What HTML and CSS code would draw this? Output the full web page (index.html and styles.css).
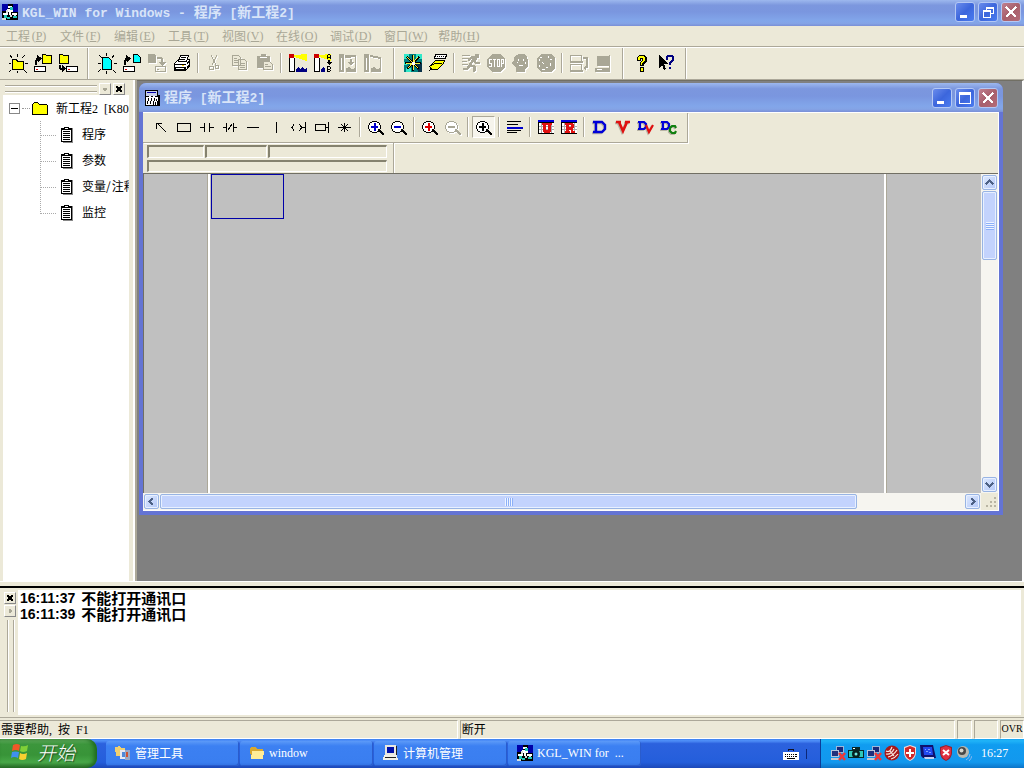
FILE: index.html
```html
<!DOCTYPE html>
<html lang="zh-CN">
<head>
<meta charset="utf-8">
<title>KGL_WIN for Windows</title>
<link rel="stylesheet" href="styles.css">
</head>
<body>
<svg class="defs" aria-hidden="true">
  <symbol id="clip" viewBox="0 0 14 17"><path d="M3 2h10v15H3z" fill="#888"/><path d="M1 2h11v14H1z" fill="#000"/><path d="M2 4h9v11H2z" fill="#fff"/><path d="M4 1h5v3H4zM3 5h7v1H3zM3 7h7v1H3zM3 9h7v1H3zM3 11h7v1H3zM3 13h7v1H3z" fill="#000"/><path d="M5 2h3v1H5z" fill="#fff"/></symbol>
  <symbol id="kgl" viewBox="0 0 16 16"><path d="M0 0h16v16H0z" fill="#000"/><path d="M0 0h6v7H0zM11 0h5v8h-5z" fill="#0000a8"/><path d="M6 2h4v2H6zM5 5h6v3H5zM1 9h5v2H1zM10 9h5v2h-5zM7 8h2v3H7z" fill="#fff"/><path d="M8 3h3v3H8zM2 11h3v3H2zM5 13h3v2H5zM11 12h4v2h-4z" fill="#20c8b8"/><path d="M4 6h2v3H4zM12 11h2v1h-2zM0 14h4v2H0zM8 11h2v2H8z" fill="#d8e0e0"/></symbol>
  <symbol id="min" viewBox="0 0 20 20"><path d="M5 13h7v3H5z" fill="#fff"/></symbol>
  <symbol id="close" viewBox="0 0 20 20"><path d="M5 5l10 10M15 5L5 15" stroke="#fff" stroke-width="2.4" fill="none"/></symbol>
  <symbol id="drive" viewBox="0 0 12 6"><path d="M.5.5h11v5H.5z" fill="#fff" stroke="#000"/><path d="M2 3h2v1H2z" fill="#e00000"/></symbol>
  <symbol id="net" viewBox="0 0 16 16"><path d="M6 1h8v7H6z" fill="#9db6d8"/><path d="M7 2h6v5H7z" fill="#182878"/><path d="M1 5h8v7H1z" fill="#b4c4dc"/><path d="M2 6h6v5H2z" fill="#20307c"/><path d="M1 13h9v2H1z" fill="#c8c8d0"/><path d="M9 8l6 7M15 8L9 15" stroke="#f03838" stroke-width="2.5"/></symbol>
  <symbol id="mag" viewBox="0 0 23 24"><path d="M8 7h5v1h2v2h1v5h-2v1h-1v1H8v-1H6v-2H5v-4h1V8h2z" fill="#fff"/><path d="M8 6h5v1H8zM6 7h2v1H6zM13 7h2v1h-2zM5 8h1v2H5zM15 8h1v2h-1zM4 10h1v4H4zM16 10h1v4h-1zM5 14h1v2H5zM6 16h2v1H6zM8 17h5v1H8zM14 14h2v2h-2zM13 16h2v1h-2zM15 15h2v2h-2zM16 16h2v2h-2zM17 17h2v2h-2zM18 18h2v2h-2z" fill="currentColor"/></symbol>
</svg>

<header class="titlebar">
  <svg class="i16"><use href="#kgl"/></svg>
  <h1><span class="lat">KGL_WIN for Windows - </span>程序<span class="lat"> [</span>新工程<span class="lat">2]</span></h1>
  <div class="winbtns">
    <button aria-label="最小化"><svg viewBox="0 0 20 20"><use href="#min"/></svg></button>
    <button aria-label="还原"><svg viewBox="0 0 20 20"><path d="M8 5h8v2H8zM15 5h1v7h-1zM8 5h1v3H8zM13 11h3v1h-3zM5 8h8v2H5zM5 8h1v8H5zM12 8h1v8h-1zM5 15h8v1H5z" fill="#fff"/></svg></button>
    <button class="x" aria-label="关闭"><svg viewBox="0 0 20 20"><use href="#close"/></svg></button>
  </div>
</header>

<nav class="menu">
  <button>工程<span class="lat">(<u>P</u>)</span></button>
  <button>文件<span class="lat">(<u>F</u>)</span></button>
  <button>编辑<span class="lat">(<u>E</u>)</span></button>
  <button>工具<span class="lat">(<u>T</u>)</span></button>
  <button>视图<span class="lat">(<u>V</u>)</span></button>
  <button>在线<span class="lat">(<u>O</u>)</span></button>
  <button>调试<span class="lat">(<u>D</u>)</span></button>
  <button>窗口<span class="lat">(<u>W</u>)</span></button>
  <button>帮助<span class="lat">(<u>H</u>)</span></button>
</nav>

<div class="toolbar">
  <div class="band">
    <button aria-label="新工程"><svg viewBox="0 0 25 24"><path d="M7.500 8.500h4l1 2h6v8h-11z" fill="#ff0" stroke="#000"/><path d="M12 3h1v3h-1zM12 20h1v2h-1zM4 12h2v1H4zM20 12h3v1h-3z"/><path d="M5 4l2 3M20 4l-3 3M4 21l2-2M19 19l3 3" stroke="#000" fill="none"/></svg></button>
    <button aria-label="打开工程"><svg viewBox="0 0 25 24"><path d="M12.500 3.500h3l1 1h5v8h-9z" fill="#ff0" stroke="#000"/><path d="M5 9h2v5H5zM6 7h2v3H6z"/><path d="M7 4l5 3-4 4z"/><use href="#drive" x="4" y="15" width="12" height="6"/></svg></button>
    <button aria-label="保存工程"><svg viewBox="0 0 25 24"><path d="M4.500 3.500h3l1 1h5v8h-9z" fill="#ff0" stroke="#000"/><path d="M4 14h2v4H4zM5 17h3v2H5z"/><path d="M7 14l4 4-4 3z"/><use href="#drive" x="11" y="15" width="12" height="6"/></svg></button>
  </div>
  <div class="band two">
    <button aria-label="新文件"><svg viewBox="0 0 25 24"><path d="M8.500 6.500h6l3 3v9h-9z" fill="#0ff" stroke="#000"/><path d="M12 2h1v3h-1zM12 20h1v3h-1zM4 12h3v1H4zM20 12h3v1h-3z"/><path d="M5 4l3 3M20 4l-2 3M4 21l3-3M19 19l3 3" stroke="#000" fill="none"/></svg></button>
    <button aria-label="打开文件"><svg viewBox="0 0 25 24"><path d="M14.500 3.500h4l3 3v5h-7z" fill="#0ff" stroke="#000"/><path d="M5 9h2v5H5zM6 7h2v3H6z"/><path d="M7 4l5 3-4 4z"/><use href="#drive" x="4" y="15" width="12" height="6"/></svg></button>
    <button class="dis" disabled aria-label="保存文件"><svg viewBox="0 0 25 24"><path d="M4 3h6l2 2v7H4zM13 6h4l2 2v3h3l-4 4-4-4h3V8h-4z"/><path d="M11.500 15.500h10v5h-10z" fill="none" stroke="#a9a796"/><path d="M13 18h2v1h-2z"/></svg></button>
    <button aria-label="打印"><svg viewBox="0 0 25 24"><path d="M5.500 12.500l4-4h11v7l-4 4h-11z" fill="#fff" stroke="#000"/><path d="M9.500 10.500l2-6h8l-2 6z" fill="#fff" stroke="#000"/><path d="M12 6h5v1h-5zM11 8h5v1h-5zM5 13h12v1H5zM6 16h11v3H6zM18 11l3-2v1l-3 3zM18 15l3-3v2l-3 3z"/><path d="M7 17h8v1H7z" fill="#fff"/><path d="M13 14h2v1h-2z" fill="#fc0"/></svg></button>
    <i class="sep"></i>
    <button class="dis" disabled aria-label="剪切"><svg viewBox="0 0 25 24"><path d="M9 4l5 10M15 4l-5 10" stroke="#a9a796" fill="none"/><circle cx="9.500" cy="17" r="2" fill="none" stroke="#a9a796"/><circle cx="15" cy="16" r="2" fill="none" stroke="#a9a796"/></svg></button>
    <button class="dis" disabled aria-label="复制"><svg viewBox="0 0 25 24"><path d="M5.500 4.500h6l2 2v8h-8zM11.500 8.500h6l2 2v8h-8z" fill="#ece9d8" stroke="#a9a796"/><path d="M7 7h3v1H7zM7 9h4v1H7zM7 11h4v1H7zM13 12h5v1h-5zM13 14h5v1h-5zM13 16h5v1h-5z"/></svg></button>
    <button class="dis" disabled aria-label="粘贴"><svg viewBox="0 0 25 24"><path d="M5 5h4V3h5v2h4v12H5z"/><path d="M8 6h7v1H8z" fill="#fff"/><path d="M11.500 10.500h6l3 3v5h-9z" fill="#ece9d8" stroke="#a9a796"/><path d="M13 13h3v1h-3zM13 15h6v1h-6z"/></svg></button>
    <i class="sep"></i>
    <button aria-label="监视"><svg viewBox="0 0 25 24"><path d="M9 4l13-1v7L9 6z" fill="#ff0"/><path d="M5 7h4v13H5z" fill="#fff"/><path d="M4 6h1v15H4zM9 7h1v14H9zM4 20h6v1H4z"/><path d="M4 3h5v4H4z" fill="#c00"/><path d="M11 18l2-2 2 2 2-2 2 2 3-1v4H11z" fill="#000080"/></svg></button>
    <button aria-label="监视 A-B"><svg viewBox="0 0 25 24"><path d="M9 4l12-1v7L9 6z" fill="#ff0"/><path d="M5 7h4v13H5z" fill="#fff"/><path d="M4 6h1v15H4zM9 7h1v14H9zM4 20h6v1H4zM18 9h2v3h-2zM16 11h6l-3 3z"/><path d="M4 3h5v4H4z" fill="#c00"/><path d="M11 18l2-2 2 2v3h-4z" fill="#000080"/><path d="M18 3h2v1h-2zM17 4h1v4h-1zM20 4h1v4h-1zM18 6h2v1h-2zM17 15h3v1h-3zM17 16h1v5h-1zM20 16h1v2h-1zM18 18h2v1h-2zM20 19h1v1h-1zM18 20h2v1h-2z"/></svg></button>
    <button class="dis" disabled aria-label="监视下移"><svg viewBox="0 0 25 24"><path d="M4 3h5v18H4zM10 4h11v2l-11 1zM20 4h1v17h-1zM11 17l3-1 2 2 5-1v4H11zM15 8h2v3h2l-3 4-3-4h2z"/><path d="M6 7h1v12H6z" fill="#fff"/></svg></button>
    <button class="dis" disabled aria-label="监视停止"><svg viewBox="0 0 25 24"><path d="M4 3h5v18H4zM10 4l11 2v15h-1V8l-10-2zM11 17l3-1 2 2 5-1v4H11z"/><path d="M6 7h1v12H6z" fill="#fff"/></svg></button>
  </div>
  <div class="band three">
    <button aria-label="连接"><svg viewBox="0 0 25 24"><path d="M4 3h18v18H4z" fill="#008080"/><path d="M4 3h5v5H4zM16 3h6v5h-6zM6 17h5v4H6zM4 11h3v3H4z" fill="#30e8c8"/><path d="M16 12h6v9h-4z" fill="#083048"/><path d="M13 4v16M5 12h16M7 6l12 12M19 6L7 18" stroke="#000" stroke-width="2.500"/><path d="M13 4v15M6 12h14M7 6l11 11M18 6L8 17" stroke="#f8f040"/><path d="M12 11h3v3h-3z" fill="#fff"/></svg></button>
    <button aria-label="编程电缆"><svg viewBox="0 0 25 24"><path d="M10.500 3.500h11l-1 4h-11z" fill="#fff" stroke="#000"/><path d="M12 5h1v1h-1zM14 5h1v1h-1zM16 5h1v1h-1zM18 5h1v1h-1z"/><path d="M10.500 9.500h9l-1 3-6 6h-6l-2-3z" fill="#ff0" stroke="#000"/><path d="M5 15l6-3h6M4 20l3-3" stroke="#000" fill="none"/></svg></button>
    <i class="sep"></i>
    <button class="dis" disabled aria-label="运行"><svg viewBox="0 0 25 24"><path d="M4 4h8v1H4zM4 7h6v1H4zM4 10h5v1H4zM4 13h6v1H4zM17 3h4v4h-4z"/><path d="M19 8l-4-2-5 3M16 8l-4 6 5 2-1 5M12 14l-3 4H5M16 9l2 3h4" fill="none" stroke="#a9a796" stroke-width="2.500"/></svg></button>
    <button class="dis" disabled aria-label="停止"><svg viewBox="0 0 25 24"><path d="M9 3h8l5 5v8l-5 5H9l-5-5V8z"/><path d="M6 8h3v1H6zM6 9h1v3H6zM6 12h3v1H6zM8 13h1v3H8zM6 15h3v1H6zM10 8h3v1h-3zM11 8h1v8h-1zM14 8h3v1h-3zM14 15h3v1h-3zM14 8h1v8h-1zM16 8h1v8h-1zM18 8h1v8h-1zM18 8h3v1h-3zM20 8h1v4h-1zM18 12h3v1h-3z" fill="#fff"/></svg></button>
    <button class="dis" disabled aria-label="暂停"><svg viewBox="0 0 25 24"><path d="M8 4l3-1h5l3 2 1 5v6l-3 2v3H8v-4l-3-3-1-3 2-1V7z"/><path d="M10 8h1v2h-1zM15 8h1v2h-1zM11 14h4v1h-4zM9 11h1v1H9zM17 11h1v2h-1z" fill="#fff"/></svg></button>
    <button class="dis" disabled aria-label="调试"><svg viewBox="0 0 25 24"><path d="M8 3h10l4 4v10l-4 4H8l-4-4V7z"/><path d="M6 8h1v2H6zM7 6h2v1H7zM15 5h1v2h-1zM17 8h2v1h-2zM9 11h1v1H9zM10 12h1v1h-1zM17 12h1v3h-1zM9 18h3v1H9zM13 16h2v1h-2zM6 14h1v2H6z" fill="#fff"/></svg></button>
    <i class="sep"></i>
    <button class="dis" disabled aria-label="传送"><svg viewBox="0 0 25 24"><path d="M4.500 4.500h11v6h-11zM4.500 13.500h11v6h-11z" fill="none" stroke="#a9a796"/><path d="M4 10h13v2H4zM4 19h13v2H4zM17 6h5v11h-2v3l-3-3 3-3V8h-3z"/></svg></button>
    <button class="dis" disabled aria-label="计算机"><svg viewBox="0 0 25 24"><path d="M6 5h12v10H6zM4 17h15v4H4zM18 4h1v13h-1z"/><path d="M6 18h5v1H6z" fill="#fff"/></svg></button>
  </div>
  <div class="band four">
    <button aria-label="帮助"><svg viewBox="0 0 25 24"><path d="M10 4h6v1h1v1h1v5h-1v1h-1v1h-1v2h-4v-4h1v-1h1V8h-1v2H8V6h1V5h1zM11 16h4v5h-4z"/><path d="M10 5h5v1h1v4h-1v1h-1v1h-1v2h-1v-3h1v-1h1V7h-3v2H9V6h1zM12 17h2v3h-2z" fill="#ff0"/></svg></button>
    <button aria-label="上下文帮助"><svg viewBox="0 0 25 24"><path d="M5 4v13l3-3 2 5 2-1-2-5h4z"/><path d="M13 4h6v1h1v5h-1v1h-1v1h-1v2h-2v-3h1v-1h1V9h1V6h-4v3h-2V5h1zM15 16h2v2h-2z" fill="#000080"/></svg></button>
  </div>
</div>

<main class="work">
  <aside class="side">
    <div class="dockhead"><i class="grip"></i>
      <button aria-label="折叠"><svg viewBox="0 0 11 11"><path d="M2 4h7L5.500 8z" fill="#a9a796"/></svg></button>
      <button aria-label="关闭面板"><svg viewBox="0 0 11 11"><path d="M2.500 2.500l6 6M8.500 2.500l-6 6" stroke="#000" stroke-width="2"/></svg></button>
    </div>
    <div class="tree">
      <div class="root"><button aria-label="收起"><svg viewBox="0 0 9 9"><path d="M1 4h7v1H1z"/></svg></button><i></i><svg class="folder" viewBox="0 0 17 14"><path d="M1 3l1-2h4l1 2h8v10H1z" fill="#ff0"/><path d="M1 12h15v1H1zM15 3h1v10h-1zM7 2h8v1H7zM2 0h4v1H2zM1 1h1v1H1zM6 1h1v1H6zM0 2h1v11H0z" fill="#000"/></svg><span>新工程<span class="lat">2  [K80S</span></span></div>
      <ul>
        <li><svg><use href="#clip"/></svg>程序</li>
        <li><svg><use href="#clip"/></svg>参数</li>
        <li><svg><use href="#clip"/></svg><span>变量<span class="slash">/</span>注释</span></li>
        <li><svg><use href="#clip"/></svg>监控</li>
      </ul>
    </div>
  </aside>
  <section class="mdi">
    <article class="child">
      <header class="ctitle">
        <svg class="i16" viewBox="0 0 16 16"><path d="M1 0h13v5h2v11H1z" fill="#000"/><path d="M2 1h11v5H2z" fill="#c8d0e8"/><path d="M3 2h9v1H3z" fill="#00a"/><path d="M2 7h3V6h2v1h2V6h2v1h3v4h-1v4H2z" fill="#fff"/><path d="M4 8h1v3H4zM3 11h1v3H3zM7 8h1v3H7zM6 11h1v3H6zM10 8h1v3h-1zM9 11h1v4H9zM12 9h1v2h-1zM11 12h1v3h-1z" fill="#000"/></svg>
        <h2>程序<span class="lat"> [</span>新工程<span class="lat">2]</span></h2>
        <div class="winbtns">
          <button aria-label="最小化"><svg viewBox="0 0 20 20"><use href="#min"/></svg></button>
          <button aria-label="最大化"><svg viewBox="0 0 20 20"><path d="M4 4h12v12H4zM5 7v8h10V7z" fill="#fff" fill-rule="evenodd"/></svg></button>
          <button class="x" aria-label="关闭"><svg viewBox="0 0 20 20"><use href="#close"/></svg></button>
        </div>
      </header>
      <div class="cbody">
        <div class="ctools">
          <button aria-label="选择"><svg viewBox="0 0 23 24"><path d="M7 8h6v1H7zM7 8h1v6H7z"/><path d="M8 8l9 9" stroke="#000"/></svg></button>
          <button aria-label="块"><svg viewBox="0 0 23 24"><path d="M5.500 8.500h13v8h-13z" fill="none" stroke="#000"/></svg></button>
          <button aria-label="常开触点"><svg viewBox="0 0 23 24"><path d="M5 12h4v1H5zM9 8h1v9H9zM14 8h1v9h-1zM15 12h4v1h-4z"/></svg></button>
          <button aria-label="常闭触点"><svg viewBox="0 0 23 24"><path d="M5 12h4v1H5zM8 8h1v9H8zM15 8h1v9h-1zM15 12h4v1h-4z"/><path d="M10 15l4-6" stroke="#000"/></svg></button>
          <button aria-label="横线"><svg viewBox="0 0 23 24"><path d="M6 12h12v1H6z"/></svg></button>
          <button aria-label="竖线"><svg viewBox="0 0 23 24"><path d="M12 7h1v11h-1z"/></svg></button>
          <button aria-label="线圈"><svg viewBox="0 0 23 24"><path d="M7 9l-2 3.500L7 16M12 9l3 3.500-3 3.500M15 12.500h3" fill="none" stroke="#000"/><path d="M18 7h1v11h-1z"/></svg></button>
          <button aria-label="功能块"><svg viewBox="0 0 23 24"><path d="M5.500 9.500h10v6h-10z" fill="none" stroke="#000"/><path d="M16 12h2v1h-2zM18 7h1v11h-1z"/></svg></button>
          <button aria-label="取反"><svg viewBox="0 0 23 24"><path d="M5 12h13v1H5zM11 8h1v9h-1z"/><path d="M8 9l7 7M15 9l-7 7" stroke="#000"/></svg></button>
          <i class="sep"></i>
          <button aria-label="放大"><svg viewBox="0 0 23 24"><use href="#mag"/><path d="M7 11h7v2H7zM10 8h2v8h-2z" fill="#00c"/></svg></button>
          <button aria-label="缩小"><svg viewBox="0 0 23 24"><use href="#mag"/><path d="M7 11h7v2H7z" fill="#00c"/></svg></button>
          <i class="sep"></i>
          <button aria-label="横向放大"><svg viewBox="0 0 23 24"><use href="#mag"/><path d="M7 11h7v2H7zM10 8h2v8h-2z" fill="#d00"/></svg></button>
          <button class="dis" disabled aria-label="横向缩小"><svg viewBox="0 0 23 24"><use href="#mag"/><path d="M7 11h7v2H7z"/></svg></button>
          <i class="sep"></i>
          <button class="pressed" aria-label="适合窗口"><svg viewBox="0 0 23 24"><use href="#mag"/><path d="M7 11h7v2H7zM10 8h2v8h-2z"/></svg></button>
          <i class="sep"></i>
          <button aria-label="注释"><svg viewBox="0 0 23 24"><path d="M4 6h14v1H4zM4 9h11v1H4zM4 15h14v1H4zM4 17h10v1H4z"/><path d="M4 12h16v2H4z" fill="#00c"/></svg></button>
          <i class="sep"></i>
          <button aria-label="使用表"><svg viewBox="0 0 23 24"><path d="M4 5h16v14H4z"/><path d="M5 8h15v10H5z" fill="#fff"/><path d="M4 5h16v2H4z" fill="#00d"/><path d="M5 11h15v1H5zM5 14h15v1H5zM7 8h1v10H7zM17 8h1v10h-1z" fill="#aaa"/><path d="M8 8h4v1h-1v6h3V9h-1V8h4v1h-1v7h-1v1h-5v-1H9V9H8z" fill="#e01010" stroke="#e01010" stroke-width="1"/></svg></button>
          <button aria-label="寄存器表"><svg viewBox="0 0 23 24"><path d="M4 5h16v14H4z"/><path d="M5 8h15v10H5z" fill="#fff"/><path d="M4 5h16v2H4z" fill="#00d"/><path d="M5 11h15v1H5zM5 14h15v1H5zM7 8h1v10H7zM17 8h1v10h-1z" fill="#aaa"/><path d="M8 8h7v1h1v3h-1v1h-1v1h1v2h2v1h-3v-3h-3v2h1v1H8v-1h1V9H8zM11 9v3h3V9z" fill="#e01010" stroke="#e01010" stroke-width="1" fill-rule="evenodd"/></svg></button>
          <i class="sep"></i>
          <button class="letter b" aria-label="设备"><svg viewBox="0 0 23 24"><path d="M5 7h9l3 3v4l-3 3H5M8 7v10" fill="none" stroke="currentColor" stroke-width="2.400"/></svg></button>
          <button class="letter r" aria-label="变量"><svg viewBox="0 0 23 24"><path d="M5 7h5M14 7h5M8 7l4 9 4-9" fill="none" stroke="currentColor" stroke-width="2.600"/></svg></button>
          <button class="letter b" aria-label="设备与变量"><svg viewBox="0 0 23 24"><path d="M4 7h6l2 2v3l-2 2H4M6 7v7" fill="none" stroke="currentColor" stroke-width="2.200"/><path d="M12 10l3 7 4-7" fill="none" stroke="#e01010" stroke-width="2.200"/></svg></button>
          <button class="letter b" aria-label="设备与注释"><svg viewBox="0 0 23 24"><path d="M4 7h6l2 2v3l-2 2H4M6 7v7" fill="none" stroke="currentColor" stroke-width="2.200"/><path d="M19 13l-1-2h-3l-2 2v3l2 2h3l1-2" fill="none" stroke="#108010" stroke-width="2.200"/></svg></button>
        </div>
        <div class="info"><div class="cells"><span></span><span></span><span></span><span></span></div></div>
        <div class="view">
          <div class="canvas"><div class="rail"></div><div class="sheet"><div class="cursor"></div></div><div class="margin"></div></div>
          <div class="vbar">
            <button aria-label="向上滚动"><svg viewBox="0 0 15 15"><path d="M3.500 9.500l4-4 4 4" fill="none" stroke="#4d6185" stroke-width="2.400"/></svg></button>
            <div class="thumb"></div><div class="room"></div>
            <button aria-label="向下滚动"><svg viewBox="0 0 15 15"><path d="M3.500 5.500l4 4 4-4" fill="none" stroke="#4d6185" stroke-width="2.400"/></svg></button>
          </div>
          <div class="hbar">
            <button aria-label="向左滚动"><svg viewBox="0 0 15 15"><path d="M9 3.500l-4 4 4 4" fill="none" stroke="#4d6185" stroke-width="2.400"/></svg></button>
            <div class="thumb"></div><div class="room"></div>
            <button aria-label="向右滚动"><svg viewBox="0 0 15 15"><path d="M6 3.500l4 4-4 4" fill="none" stroke="#4d6185" stroke-width="2.400"/></svg></button>
          </div>
          <svg class="corner" viewBox="0 0 17 17"><path d="M13 4h2v2h-2zM9 8h2v2H9zM13 8h2v2h-2zM5 12h2v2H5zM9 12h2v2H9zM13 12h2v2h-2z" fill="#b8b4a2"/></svg>
        </div>
      </div>
    </article>
  </section>
</main>

<section class="output">
  <div class="odock">
    <button aria-label="关闭输出"><svg viewBox="0 0 11 11"><path d="M2.500 2.500l6 6M8.500 2.500l-6 6" stroke="#000" stroke-width="2"/></svg></button>
    <button aria-label="展开输出"><svg viewBox="0 0 11 11"><path d="M4 2l4 3.500L4 9z" fill="#a9a796"/></svg></button>
    <i></i>
  </div>
  <div class="log">
    <p><time>16:11:37</time><span>不能打开通讯口</span></p>
    <p><time>16:11:39</time><span>不能打开通讯口</span></p>
  </div>
</section>

<footer class="status">
  <span class="s1">需要帮助<span class="lat">,  </span>按<span class="lat">  F1</span></span>
  <span class="s2">断开</span><span class="s3"></span><span class="s4"></span><span class="s5">OVR</span>
</footer>

<nav class="taskbar">
  <button class="start"><svg viewBox="0 0 20 20"><path d="M3 3q4-2 7 0L9 9Q6 7 2 9z" fill="#f05828"/><path d="M11 4q4 1 7-1l-1 6q-4 2-7 0z" fill="#80d038"/><path d="M2 10q3-1 7 0l-1 6q-4-2-7 0z" fill="#4090f0"/><path d="M10 11q3 2 7 0l-1 6q-4 2-7 0z" fill="#f8d030"/></svg><span>开始</span></button>
  <div class="tasks">
    <button><svg viewBox="0 0 16 16"><path d="M0 2l5-1 1 2h4v8H1z" fill="#f0d070"/><path d="M5 5h5v9H5z" fill="#e8e8f0"/><path d="M10 5h5v10h-5z" fill="#98a8c8"/><path d="M7 7h3v5H7z" fill="#5088d8"/><path d="M11 7h2v5h-2z" fill="#d05030"/></svg>管理工具</button>
    <button><svg viewBox="0 0 16 16"><path d="M1 3l1-1h4l2 2h6v10H2z" fill="#d8a830"/><path d="M3 6h12l-1 8H2z" fill="#ffec98"/></svg><span class="lat">window</span></button>
    <button><svg viewBox="0 0 16 16"><path d="M2 0h11v10H2z" fill="#e8e8e0"/><path d="M4 2h7v6H4z" fill="#0010a8"/><path d="M1 10h13l1 5H0z" fill="#f0f0e8"/><path d="M2 12h11v1H2zM13 1h1v9h-1z" fill="#222"/></svg>计算机管理</button>
    <button><svg><use href="#kgl"/></svg><span class="lat">KGL_WIN for  ...</span></button>
  </div>
  <div class="lang"><svg viewBox="0 0 16 12"><path d="M0 4h16v8H0z" fill="#fff"/><path d="M2 6h1v1H2zM4 6h1v1H4zM6 6h1v1H6zM8 6h1v1H8zM10 6h1v1h-1zM12 6h2v1h-2zM2 8h1v1H2zM4 8h1v1H4zM6 8h1v1H6zM8 8h1v1H8zM10 8h1v1h-1zM12 8h2v1h-2zM4 10h8v1H4z" fill="#000"/><path d="M5 3V1h5v2" fill="none" stroke="#112"/></svg><i></i></div>
  <div class="tray">
    <svg><use href="#net"/></svg>
    <svg viewBox="0 0 16 16"><path d="M0 5h4V2h8v3h4v8H0z" fill="#082828"/><path d="M1 6h14v6H1z" fill="#30c8b8"/><circle cx="8" cy="9" r="4" fill="#062020"/><circle cx="8" cy="9" r="1.500" fill="#70e8e0"/><path d="M5 3h2v1H5z" fill="#fff"/></svg>
    <svg><use href="#net"/></svg>
    <svg viewBox="0 0 16 16"><circle cx="8" cy="8" r="7.500" fill="#a81818"/><path d="M2 6q4 2 6-4M4 12q5-1 9-7M2 9q5 1 8-5M7 14q4-1 7-5M6 6l4 5" fill="none" stroke="#f8e8e0" stroke-width="1.200"/></svg>
    <svg viewBox="0 0 16 16"><path d="M8 0l6 2v6q0 5-6 8-6-3-6-8V2z" fill="#f0d8d8"/><path d="M8 1l5 2v5q0 4-5 7-5-3-5-7V3z" fill="#d02828"/><path d="M7 4h2v3h3v2H9v3H7V9H4V7h3z" fill="#fff"/></svg>
    <svg viewBox="0 0 16 16"><path d="M0 0h13l3 13H3L1 11z" fill="#10106c"/><path d="M3 2h9l1 8H4z" fill="#2048f0"/><path d="M5 4h1v1H5zM8 4h2v1H8zM6 6h2v1H6zM9 7h2v1H9z" fill="#80a0ff"/><path d="M4 12h10v2H5z" fill="#c8d0f0"/></svg>
    <svg viewBox="0 0 16 16"><path d="M8 0l6 2v6q0 5-6 8-6-3-6-8V2z" fill="#982030"/><path d="M8 1l5 2v5q0 4-5 7-5-3-5-7V3z" fill="#e03040"/><path d="M5 5l6 5M11 5l-6 5" stroke="#fff" stroke-width="2"/></svg>
    <svg viewBox="0 0 16 16"><circle cx="7" cy="7" r="6" fill="#b8b8b0"/><circle cx="6" cy="6" r="4" fill="#484848"/><circle cx="5.500" cy="5.500" r="2" fill="#d8d8d0"/><path d="M10 15q4-2 4-6M13 16q2-2 3-5" fill="none" stroke="#88b8f0"/></svg>
    <time class="lat">16:27</time>
  </div>
</nav>
</body>
</html>
```
FILE: styles.css
```css
* { box-sizing: border-box; }
html, body { height: 100%; margin: 0; }
body {
  display: flex;
  flex-direction: column;
  overflow: hidden;
  background: #ece9d8;
  color: #000;
  font: 12px/16px "Noto Sans CJK SC", sans-serif;
}
button {
  display: flex;
  align-items: center;
  justify-content: center;
  margin: 0;
  padding: 0;
  border: 0;
  background: none;
  color: inherit;
  font: inherit;
}
h1, h2, p, ul { margin: 0; padding: 0; font: inherit; }
ul { list-style: none; }
svg { display: block; flex: none; shape-rendering: crispEdges; }
.defs { position: absolute; width: 0; height: 0; }
.lat { font-family: "Liberation Serif", serif; font-size: 12px; white-space: pre; }
.i16 { width: 16px; height: 16px; }

/* Title bars */
.titlebar, .ctitle {
  display: flex;
  flex: none;
  align-items: center;
  gap: 4px;
  background: linear-gradient(#9db8ee 0, #7c97de 20%, #7a96df 45%, #82a6ea 80%, #84a4e6 90%, #7a8fd6 100%);
  color: #d8e4f8;
  font-weight: bold;
}
.titlebar { height: 26px; padding: 0 3px 2px 2px; }
.titlebar h1, .ctitle h2 { flex: 1; font-size: 14px; line-height: 20px; white-space: pre; }
.titlebar .lat, .ctitle .lat { font-family: "Liberation Mono", monospace; font-size: 13px; }
.winbtns { display: flex; gap: 3px; }
.winbtns button {
  width: 20px;
  height: 20px;
  border: 1px solid #b4c8f4;
  border-radius: 3px;
  background: linear-gradient(135deg, #6a8cec, #3c66dc 50%, #4a7cf0);
}
.winbtns .x { background: linear-gradient(135deg, #c08090, #a8606c 50%, #b46c78); }
.winbtns svg { width: 20px; height: 20px; }

/* Menu */
.menu { display: flex; flex: none; height: 21px; border-bottom: 1px solid #aca899; color: #a9a796; }
.menu button { padding: 0 6px; }
.menu .lat { width: 18px; text-align: center; }

/* Main toolbar */
.toolbar { display: flex; flex: none; height: 33px; border-top: 1px solid #fff; border-bottom: 1px solid #aca899; }
.band { display: flex; align-items: center; padding: 0 6px 2px; border-right: 1px solid #aca899; box-shadow: 1px 0 #fff; }
.band:first-child { padding-left: 5px; padding-right: 7px; }
.two { padding-right: 8px; }
.band button, .band button svg { width: 25px; height: 24px; }
.sep { flex: none; width: 2px; height: 20px; margin: 0 3px; border-left: 1px solid #aca899; border-right: 1px solid #fff; }
.dis { color: #a9a796; }
.dis svg { fill: #a9a796; filter: drop-shadow(1px 1px 0 #fff); }

/* Work area */
.work { display: flex; flex: 1; min-height: 0; border-bottom: 1px solid #fff; }
.side { display: flex; flex: none; flex-direction: column; width: 137px; padding: 2px 6px 0 3px; border-right: 2px solid #aca899; box-shadow: inset -2px 0 #fff; }
.dockhead { display: flex; align-items: center; gap: 2px; height: 13px; padding: 0 4px 0 2px; }
.grip { flex: 1; height: 7px; border: 1px solid #aca899; border-width: 1px 0; box-shadow: inset 0 1px #fff, 0 1px #fff; }
.dockhead button, .odock button { width: 12px; height: 12px; border: 1px solid; border-color: #fff #888 #888 #fff; }
.dockhead svg, .odock svg { width: 10px; height: 10px; }
.tree { flex: 1; overflow: hidden; padding-top: 1px; background: #fff; white-space: nowrap; }
.root { display: flex; align-items: center; height: 25px; padding-left: 6px; }
.root button { flex: none; width: 11px; height: 11px; border: 1px solid #888; }
.root button svg { width: 9px; height: 9px; }
.root i { flex: none; width: 8px; margin: 0 2px; border-top: 1px dotted #999; }
.folder { width: 17px; height: 14px; margin-right: 7px; }
.tree ul { margin-left: 37px; }
.tree li { display: flex; align-items: center; height: 26px; }
.tree li::before { content: ""; flex: none; align-self: flex-start; width: 15px; height: 26px; margin-top: -12px; border: 1px dotted #aaa; border-width: 0 0 1px 1px; }
.tree li:first-child::before { height: 14px; margin-top: 0; }
.tree li svg { width: 14px; height: 17px; margin: 0 8px 0 4px; }
.slash { padding: 0 1px 0 0; }

/* Document window */
.mdi { display: flex; flex: 1; min-width: 0; padding: 2px 19px 66px 2px; border-top: 1px solid #716f64; border-right: 2px solid #fff; background: #808080; }
.child { display: flex; flex: 1; flex-direction: column; min-width: 0; border: solid #6474d4; border-width: 0 4px 4px; border-radius: 7px 7px 0 0; background: #6474d4; }
.ctitle { height: 29px; margin: 0 -4px; padding: 0 5px; border-radius: 7px 7px 0 0; }
.cbody { display: flex; flex: 1; flex-direction: column; min-height: 0; border: 1px solid #fff; border-left: 0; background: #ece9d8; }
.ctools { display: flex; align-items: center; align-self: flex-start; height: 30px; padding: 0 7px 2px 6px; border: 1px solid #aca899; border-width: 0 1px 1px 0; box-shadow: 1px 1px #fff; }
.ctools button, .ctools button svg { width: 23px; height: 24px; }
.ctools .pressed { height: 22px; border: 1px solid; border-color: #aca899 #fff #fff #aca899; background: #f6f4ec; }
.letter svg { filter: drop-shadow(-1px 1px 0 #b8b4a4); shape-rendering: auto; }
.b { color: #0000d8; }
.r { color: #e01010; }
.info { display: flex; height: 30px; padding-left: 4px; }
.cells { display: grid; grid-template-columns: 57px 62px 119px; grid-template-rows: 13px 12px; gap: 2px 1px; padding: 2px 6px 0 0; border-right: 1px solid #aca899; box-shadow: 1px 0 #fff; }
.cells span { border: solid; border-width: 2px 1px 1px 2px; border-color: #85826f #fff #fff #85826f; }
.cells span:last-child { grid-column: 1 / -1; }
.view { display: grid; flex: 1; grid-template-columns: 1fr 17px; grid-template-rows: 1fr 17px; min-height: 0; border-top: 1px solid #716f64; }
.canvas { display: flex; background: #c0c0c0; border-left: 1px solid #716f64; }
.rail { width: 66px; border-right: 2px solid #fff; box-shadow: inset -1px 0 #aca899; }
.sheet { flex: 1; padding-left: 1px; border-right: 2px solid #fff; }
.margin { width: 95px; border-left: 1px solid #aca899; }
.cursor { width: 73px; height: 45px; border: 1px solid #0000a8; }
.vbar, .hbar { display: flex; gap: 1px; padding: 1px; background: #f6f5f0; }
.vbar { flex-direction: column; }
.vbar button, .hbar button, .thumb { flex: none; border: 1px solid #98b4e4; border-radius: 2px; background: linear-gradient(135deg, #dce8fe, #b4c8f8); box-shadow: inset 0 0 0 1px #e8f0ff; }
.vbar button, .hbar button { width: 15px; height: 15px; }
.vbar button svg, .hbar button svg { width: 13px; height: 13px; }
.thumb { display: flex; align-items: center; justify-content: center; background: #c3d3fd; }
.vbar .thumb { height: 69px; }
.hbar .thumb { flex: 695 0 0; }
.thumb::after { content: ""; width: 8px; height: 8px; }
.vbar .thumb::after { background: repeating-linear-gradient(#eef4ff 0 1px, #8cb0f8 1px 2px); }
.hbar .thumb::after { background: repeating-linear-gradient(90deg, #eef4ff 0 1px, #8cb0f8 1px 2px); }
.vbar .room { flex: 1; }
.hbar .room { flex: 106 0 0; }
.corner { width: 17px; height: 17px; }

/* Output panel */
.output { display: flex; flex: none; height: 132px; margin-top: 4px; padding: 2px 3px 2px 4px; border-top: 2px solid #000; border-bottom: 1px solid #aca899; }
.odock { display: flex; flex-direction: column; align-items: center; width: 14px; padding: 2px 2px 3px 0; gap: 1px; }
.odock i { flex: 1; width: 7px; margin-top: 2px; border: 1px solid #aca899; border-width: 0 1px; box-shadow: inset 1px 0 #fff, 1px 0 #fff; }
.log { flex: 1; background: #fff; padding-left: 2px; font-size: 15px; font-weight: bold; }
.log p { display: flex; gap: 6px; height: 16px; }
.log time { font: bold 14px/16px "Liberation Sans", sans-serif; }

/* Status bar */
.status { display: flex; flex: none; gap: 2px; height: 19px; margin-top: 2px; }
.status > span { padding-left: 1px; border: 1px solid; border-color: #aca899 #fff #fff #aca899; white-space: pre; }
.status .s1 { flex: 459; padding-left: 1px; border-left: 0; }
.status .s2 { flex: 496; }
.s3 { width: 15px; }
.s4 { width: 24px; }
.status .s5 { width: 24px; padding: 0; font: 10px/16px "Liberation Serif", serif; text-align: center; }

/* Taskbar */
.taskbar { display: flex; flex: none; height: 29px; background: linear-gradient(#3c80f0 0, #5090f8 6%, #2c62de 16%, #245edb 80%, #1c48b8 100%); color: #fff; }
.start { width: 97px; justify-content: flex-start; gap: 7px; padding: 0 0 3px 10px; border-radius: 0 10px 10px 0; background: linear-gradient(#69b266 0, #3c963c 18%, #389438 55%, #47a747 80%, #2a6c2a 100%); box-shadow: inset -3px 0 4px #1e6a1e; font-size: 19px; font-style: italic; font-weight: 300; text-shadow: 1px 1px 1px #204820; }
.start svg { width: 20px; height: 20px; shape-rendering: auto; }
.tasks { display: flex; flex: 1; gap: 1px; padding: 2px 0 2px 9px; }
.tasks button { flex: 0 1 133px; justify-content: flex-start; gap: 4px; padding: 0 0 2px 9px; border-radius: 3px; background: linear-gradient(#5c9af8, #3c80f2 20%, #3a7ef0 85%, #3070e0); box-shadow: inset -1px -1px #2a5ccc; white-space: nowrap; }
.tasks svg { width: 16px; height: 16px; }
.lang { display: flex; align-items: center; gap: 7px; padding-right: 13px; }
.lang svg { width: 16px; height: 12px; }
.lang i { width: 1px; height: 10px; background: #0c2878; }
.tray { display: flex; align-items: center; gap: 2px; padding: 0 13px 2px 9px; border-left: 1px solid #0c3c98; background: linear-gradient(#18a0f0 0, #20b4f8 6%, #109cf0 20%, #1298ee 80%, #0c74c8 100%); }
.tray svg { width: 16px; height: 16px; shape-rendering: auto; }
.tray time { width: 30px; margin-left: 7px; }
```
